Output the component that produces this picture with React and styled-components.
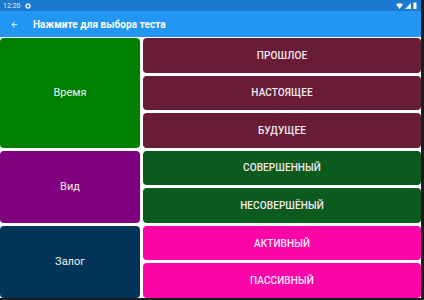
import React from "react";
import styled, { createGlobalStyle } from "styled-components";

const Global = createGlobalStyle`
  html, body { margin: 0; padding: 0; background: #1b1b1b; }
  body { font-family: Roboto, "Noto Sans", sans-serif; }
`;

const Screen = styled.div`
  width: 421px;
  height: 298px;
  background: #ffffff;
  display: flex;
  flex-direction: column;
  overflow: hidden;
`;

const StatusBar = styled.div`
  height: 11px;
  background: #1b79cf;
  display: flex;
  align-items: center;
  justify-content: space-between;
  padding: 0 4px 0 3px;
  color: #e6f0fa;
  font-size: 7px;
`;

const StatusLeft = styled.div`
  display: flex;
  align-items: center;
  gap: 5px;
`;

const StatusRight = styled.div`
  display: flex;
  align-items: center;
  gap: 2px;
`;

const Toolbar = styled.div`
  height: 26px;
  background: #2196f3;
  display: flex;
  align-items: center;
  padding-left: 10px;
  gap: 14px;
  color: #ffffff;
`;

const Title = styled.div`
  font-size: 10px;
  font-weight: 700;
  letter-spacing: 0.05px;
`;

const Grid = styled.div`
  flex: 1;
  margin-top: 1px;
  display: grid;
  grid-template-columns: 140px 1fr;
  grid-template-rows: repeat(7, 1fr);
  column-gap: 3px;
  row-gap: 3px;
`;

const Category = styled.div`
  grid-column: 1;
  grid-row: ${(p) => p.$start} / span ${(p) => p.$span};
  background: ${(p) => p.$bg};
  border-radius: 4px;
  display: flex;
  align-items: center;
  justify-content: center;
  color: #eef2ee;
  font-size: 11px;
  font-weight: 400;
`;

const Option = styled.div`
  grid-column: 2;
  grid-row: ${(p) => p.$row};
  background: ${(p) => p.$bg};
  border-radius: 4px;
  display: flex;
  align-items: center;
  justify-content: center;
  color: #f8ecf2;
  font-size: 10px;
  font-weight: 500;
  letter-spacing: 0.1px;
`;

const groups = [
  { name: "Время", bg: "#008000", optBg: "#691c35", options: ["ПРОШЛОЕ", "НАСТОЯЩЕЕ", "БУДУЩЕЕ"] },
  { name: "Вид", bg: "#800080", optBg: "#0b5a1e", options: ["СОВЕРШЕННЫЙ", "НЕСОВЕРШЁНЫЙ"] },
  { name: "Залог", bg: "#02345a", optBg: "#fb05a9", options: ["АКТИВНЫЙ", "ПАССИВНЫЙ"] },
];

export default function App() {
  let row = 1;
  const cells = [];
  groups.forEach((g) => {
    const start = row;
    cells.push(
      <Category key={g.name} $start={start} $span={g.options.length} $bg={g.bg}>
        {g.name}
      </Category>
    );
    g.options.forEach((o, i) => {
      cells.push(
        <Option key={o} $row={start + i} $bg={g.optBg}>
          {o}
        </Option>
      );
    });
    row += g.options.length;
  });

  return (
    <>
      <Global />
      <Screen>
        <StatusBar>
          <StatusLeft>
            <span>12:20</span>
            <svg width="6" height="6" viewBox="0 0 6 6">
              <circle cx="3" cy="3" r="2.7" fill="#e6f0fa" />
              <circle cx="3" cy="3" r="1.2" fill="#1b79cf" />
            </svg>
          </StatusLeft>
          <StatusRight>
            <svg width="7" height="6" viewBox="0 0 7 6">
              <path d="M0 1.5 Q3.5 -1 7 1.5 L3.5 6 Z" fill="#ffffff" />
            </svg>
            <svg width="6" height="6" viewBox="0 0 6 6">
              <path d="M6 0 L6 6 L0 6 Z" fill="#e6f0fa" />
            </svg>
            <svg width="4" height="7" viewBox="0 0 4 7">
              <rect x="0.5" y="0.5" width="3" height="6.5" fill="#ffffff" />
            </svg>
          </StatusRight>
        </StatusBar>
        <Toolbar>
          <svg width="9" height="9" viewBox="0 0 24 24">
            <path d="M20 11H7.83l5.59-5.59L12 4l-8 8 8 8 1.41-1.41L7.83 13H20v-2z" fill="#ffffff" />
          </svg>
          <Title>Нажмите для выбора теста</Title>
        </Toolbar>
        <Grid>{cells}</Grid>
      </Screen>
    </>
  );
}
